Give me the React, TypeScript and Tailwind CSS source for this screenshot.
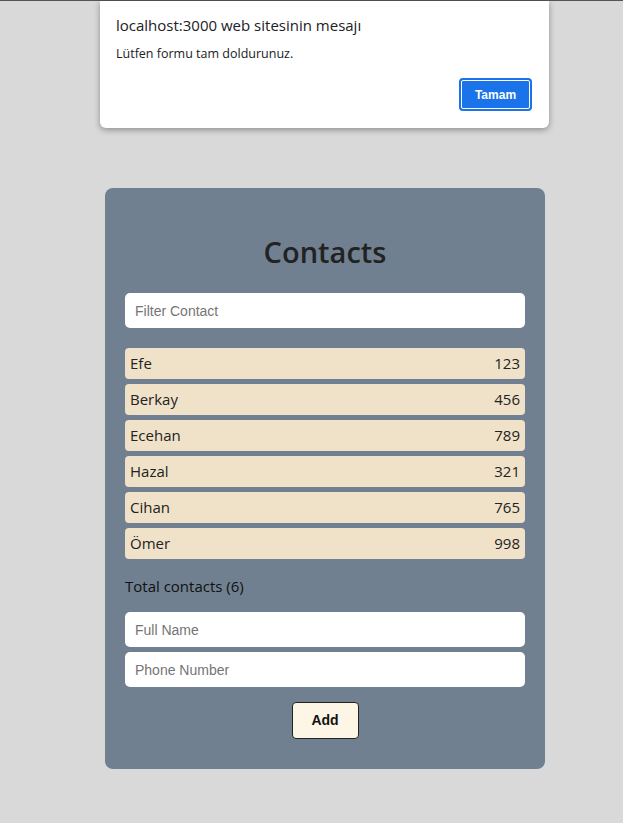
import React from "react";

const contacts = [
  { name: "Efe", phone: "123" },
  { name: "Berkay", phone: "456" },
  { name: "Ecehan", phone: "789" },
  { name: "Hazal", phone: "321" },
  { name: "Cihan", phone: "765" },
  { name: "Ömer", phone: "998" },
];

export default function App() {
  return (
    <div className="relative min-h-[823px] w-full bg-[#d9d9d9] border-t border-[#555]" style={{ fontFamily: '"Open Sans", "Noto Sans", sans-serif' }}>
      {/* alert dialog */}
      <div className="absolute left-[100px] top-0 w-[449px] h-[127px] bg-white rounded-b-[6px] shadow-[0_2px_6px_rgba(0,0,0,0.35)] px-4 pt-[14px]">
        <div className="text-[15px] text-[#202124] leading-5">localhost:3000 web sitesinin mesajı</div>
        <div className="text-[12.5px] text-[#202124] mt-[11px] leading-4">Lütfen formu tam doldurunuz.</div>
        <div className="flex justify-end mt-[16px] pr-[1px]">
          <button className="w-[73px] h-[33px] rounded-[4px] bg-[#1a73e8] text-white text-[12px] font-bold border-2 border-[#1a73e8] outline outline-1 outline-white -outline-offset-[3px]" style={{ fontFamily: '"Liberation Sans", Arial, sans-serif' }}>
            Tamam
          </button>
        </div>
      </div>

      <div className="pt-[187px] pl-[105px]">
        <div className="w-[440px] h-[581px] bg-[#708090] rounded-[8px] px-5 pt-[44px]">
          <h1 className="text-center text-[29px] font-semibold text-[#222] leading-[40px] mb-[21px]">Contacts</h1>
          <input
            placeholder="Filter Contact"
            className="w-full h-[35px] bg-white rounded-[5px] px-[10px] text-[14px] placeholder:text-[#757575] outline-none"
            style={{ fontFamily: '"Liberation Sans", Arial, sans-serif' }}
          />
          <ul className="mt-5 flex flex-col gap-[5px]">
            {contacts.map((c) => (
              <li key={c.name} className="h-[31px] bg-[#f0e2c9] rounded-[4px] flex items-center justify-between px-[5px] text-[15px] text-[#222]">
                <span>{c.name}</span>
                <span>{c.phone}</span>
              </li>
            ))}
          </ul>
          <div className="mt-[15px] text-[15px] text-[#111] leading-6">Total contacts (6)</div>
          <div className="mt-[14px] flex flex-col gap-[5px]" style={{ fontFamily: '"Liberation Sans", Arial, sans-serif' }}>
            <input placeholder="Full Name" className="w-full h-[35px] bg-white rounded-[5px] px-[10px] text-[14px] placeholder:text-[#757575] outline-none" />
            <input placeholder="Phone Number" className="w-full h-[35px] bg-white rounded-[5px] px-[10px] text-[14px] placeholder:text-[#757575] outline-none" />
          </div>
          <div className="flex justify-center mt-[15px]">
            <button className="w-[67px] h-[37px] bg-[#fdf5e6] border border-[#222] rounded-[4px] text-[14px] font-bold text-[#111]" style={{ fontFamily: '"Liberation Sans", Arial, sans-serif' }}>
              Add
            </button>
          </div>
        </div>
      </div>
    </div>
  );
}
